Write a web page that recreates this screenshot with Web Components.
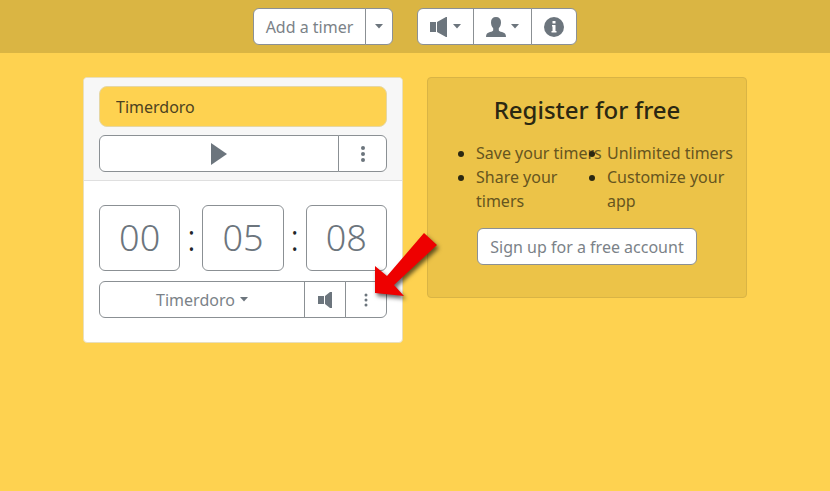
<!DOCTYPE html>
<html lang="en">
<head>
    <meta charset="UTF-8">
    <meta name="viewport" content="width=device-width, initial-scale=1.0">
    <title>Timerdoro</title>
    <style>
        body {
            margin: 0;
            min-height: 100vh;
            background: #fed250;
            color: #212529;
            font: 16px/24px "Noto Sans", "Open Sans", sans-serif;
        }

        main {
            display: flex;
            flex-wrap: wrap;
            justify-content: center;
            align-items: flex-start;
            gap: 24px;
            padding: 24px 16px;
        }
    </style>
</head>
<body>
    <app-toolbar></app-toolbar>
    <main>
        <timer-card name="Timerdoro" time="00:05:08"></timer-card>
        <register-card></register-card>
    </main>

    <script>
        // Styles shared by every button in the app
        const buttonStyles = /* css */ `
            * {
                box-sizing: border-box;
            }

            button {
                display: flex;
                align-items: center;
                justify-content: center;
                gap: 5px;
                height: 37px;
                margin: 0;
                padding: 0 12px;
                border: 1px solid #8b9094;
                border-radius: 6px;
                background: #fff;
                color: #7b8288;
                font: inherit;
                white-space: nowrap;
                cursor: pointer;
            }

            button:hover {
                background: #f1f1f1;
            }

            app-icon {
                color: #6c757d;
            }
        `;

        const icons = {
            play: '<svg width="18" height="24" viewBox="0 0 18 24"><path d="M1 1v22l16-11z"/></svg>',
            speaker: '<svg width="18" height="20" viewBox="0 0 18 20"><path d="M0 5h6v10H0zM7 5l9-5h1v20h-1l-9-5z"/></svg>',
            horn: '<svg width="15" height="16" viewBox="0 0 15 16"><path d="M0 4h6v8H0zM7 4l5-4h2v16h-2l-5-4z"/></svg>',
            user: '<svg width="20" height="20" viewBox="0 0 20 20"><path d="M10 0c3.200 0 5 2 5 5.200 0 2.600-.8 4.600-2.200 6v2c0 .8 1.200 1.200 3.200 1.800 2.600.8 4 1.800 4 5H0c0-3.200 1.400-4.200 4-5 2-.6 3.200-1 3.200-1.800v-2C5.800 9.800 5 7.800 5 5.200 5 2 6.800 0 10 0z"/></svg>',
            info: '<svg width="20" height="20" viewBox="0 0 20 20"><circle cx="10" cy="10" r="10"/><path fill="#fff" d="M8.500 4h3v2.500h-3zM8 8h3.500v6h1v1.500h-5V14h1V9.500H8z"/></svg>',
            caret: '<svg width="8" height="5" viewBox="0 0 8 5"><path d="M0 0h8L4 4.500z"/></svg>',
            dots: '<svg width="6" height="18" viewBox="0 0 6 18"><circle cx="3" cy="3" r="2"/><circle cx="3" cy="9" r="2"/><circle cx="3" cy="15" r="2"/></svg>',
            smalldots: '<svg width="4" height="14" viewBox="0 0 4 14"><circle cx="2" cy="2" r="1.500"/><circle cx="2" cy="7" r="1.500"/><circle cx="2" cy="12" r="1.500"/></svg>'
        };

        class AppIcon extends HTMLElement {

            constructor() {
                super();
                this.attachShadow({ mode: "open" });
            }

            connectedCallback() {
                this.shadowRoot.innerHTML = /* html */ `
                    <style>
                        :host {
                            display: inline-flex;
                        }

                        svg {
                            display: block;
                            fill: currentColor;
                        }
                    </style>
                    ${icons[this.getAttribute("name")]}
                `;
            }

        }

        // Joins the buttons passed in so that they share their borders
        class ButtonGroup extends HTMLElement {

            constructor() {
                super();
                this.attachShadow({ mode: "open" });
            }

            connectedCallback() {
                this.shadowRoot.innerHTML = /* html */ `
                    <style>
                        :host {
                            display: flex;
                        }

                        ::slotted(button:not(:first-child)) {
                            margin-left: -1px !important;
                            border-top-left-radius: 0 !important;
                            border-bottom-left-radius: 0 !important;
                        }

                        ::slotted(button:not(:last-child)) {
                            border-top-right-radius: 0 !important;
                            border-bottom-right-radius: 0 !important;
                        }
                    </style>
                    <slot></slot>
                `;
            }

        }

        class AppToolbar extends HTMLElement {

            constructor() {
                super();
                this.attachShadow({ mode: "open" });
            }

            connectedCallback() {
                this.shadowRoot.innerHTML = /* html */ `
                    <style>
                        ${buttonStyles}

                        :host {
                            display: flex;
                            justify-content: center;
                            gap: 24px;
                            padding: 8px;
                            background: #dab543;
                        }

                        .narrow {
                            padding: 0 9px;
                        }
                    </style>

                    <button-group>
                        <button type="button">Add a timer</button>
                        <button type="button" class="narrow" aria-label="More timers"><app-icon name="caret"></app-icon></button>
                    </button-group>
                    <button-group>
                        <button type="button" aria-label="Sound"><app-icon name="speaker"></app-icon><app-icon name="caret"></app-icon></button>
                        <button type="button" aria-label="Account"><app-icon name="user"></app-icon><app-icon name="caret"></app-icon></button>
                        <button type="button" aria-label="About"><app-icon name="info"></app-icon></button>
                    </button-group>
                `;
            }

        }

        class TimerCard extends HTMLElement {

            constructor() {
                super();
                this.attachShadow({ mode: "open" });
            }

            connectedCallback() {
                const name = this.getAttribute("name");
                const digits = this.getAttribute("time").split(":")
                    .map(part => `<button type="button">${part}</button>`)
                    .join("<span>:</span>");

                this.shadowRoot.innerHTML = /* html */ `
                    <style>
                        ${buttonStyles}

                        :host {
                            display: block;
                            position: relative;
                            box-sizing: border-box;
                            flex: 0 1 320px;
                            border: 1px solid #e9dfbd;
                            border-radius: 4px;
                            background: #fff;
                        }

                        header {
                            display: grid;
                            gap: 8px;
                            padding: 8px 15px;
                            border-bottom: 1px solid #dfdfdf;
                            border-radius: 4px 4px 0 0;
                            background: #f7f7f7;
                        }

                        input {
                            width: 100%;
                            height: 41px;
                            padding: 0 16px;
                            border: 1px solid #e6d7a4;
                            border-radius: 8px;
                            background: #fed250;
                            color: #4d4220;
                            font: inherit;
                        }

                        section {
                            display: grid;
                            gap: 10px;
                            padding: 24px 15px;
                        }

                        .time {
                            display: flex;
                            align-items: center;
                            font-size: 36px;
                            font-weight: 300;
                        }

                        .time button {
                            flex: 1;
                            height: 66px;
                            padding: 0;
                            color: #6c757d;
                        }

                        .time span {
                            width: 22px;
                            text-align: center;
                        }

                        .grow {
                            flex: 1;
                        }

                        .menu {
                            width: 49px;
                        }

                        .small {
                            width: 42px;
                        }

                        pointer-arrow {
                            position: absolute;
                            top: 154px;
                            right: -41px;
                        }
                    </style>

                    <header>
                        <input type="text" aria-label="Timer name" value="${name}">
                        <button-group>
                            <button type="button" class="grow" aria-label="Start"><app-icon name="play"></app-icon></button>
                            <button type="button" class="menu" aria-label="Timer options"><app-icon name="dots"></app-icon></button>
                        </button-group>
                    </header>
                    <section>
                        <div class="time">${digits}</div>
                        <button-group>
                            <button type="button" class="grow">${name}<app-icon name="caret"></app-icon></button>
                            <button type="button" class="small" aria-label="Alarm sound"><app-icon name="horn"></app-icon></button>
                            <button type="button" class="small" aria-label="Interval options"><app-icon name="smalldots"></app-icon></button>
                        </button-group>
                    </section>
                    <pointer-arrow></pointer-arrow>
                `;
            }

        }

        class RegisterCard extends HTMLElement {

            constructor() {
                super();
                this.attachShadow({ mode: "open" });
            }

            connectedCallback() {
                this.shadowRoot.innerHTML = /* html */ `
                    <style>
                        ${buttonStyles}

                        :host {
                            display: flex;
                            flex-direction: column;
                            align-items: center;
                            box-sizing: border-box;
                            flex: 0 1 320px;
                            min-width: 0;
                            padding: 15px 16px 32px;
                            border: 1px solid #d9b445;
                            border-radius: 4px;
                            background: #ecc348;
                        }

                        h2 {
                            margin: 0 0 14px;
                            color: #2b2812;
                            font-size: 24px;
                            font-weight: 500;
                            line-height: 34px;
                        }

                        ul {
                            align-self: stretch;
                            columns: 2;
                            column-gap: 8px;
                            margin: 0 0 15px;
                            padding-left: 32px;
                            color: #66551f;
                        }

                        li::marker {
                            color: #2b2812;
                        }

                        .line {
                            white-space: nowrap;
                        }
                    </style>

                    <h2>Register for free</h2>
                    <ul>
                        <li class="line">Save your timers</li>
                        <li>Share your timers</li>
                        <li class="line">Unlimited timers</li>
                        <li>Customize your app</li>
                    </ul>
                    <button type="button">Sign up for a free account</button>
                `;
            }

        }

        // Red arrow that points at the interval options
        class PointerArrow extends HTMLElement {

            constructor() {
                super();
                this.attachShadow({ mode: "open" });
            }

            connectedCallback() {
                this.shadowRoot.innerHTML = /* html */ `
                    <style>
                        :host {
                            display: block;
                            pointer-events: none;
                        }

                        svg {
                            display: block;
                            filter: drop-shadow(2px 3px 2px rgba(0, 0, 0, 0.6));
                        }
                    </style>
                    <svg width="68" height="68" viewBox="0 0 68 68">
                        <path fill="#ee0000" d="M49 1l13 12-43 40 10 11-29-3V34l12 10z"/>
                    </svg>
                `;
            }

        }

        customElements.define('app-icon', AppIcon);
        customElements.define('button-group', ButtonGroup);
        customElements.define('pointer-arrow', PointerArrow);
        customElements.define('app-toolbar', AppToolbar);
        customElements.define('timer-card', TimerCard);
        customElements.define('register-card', RegisterCard);
    </script>
</body>
</html>
